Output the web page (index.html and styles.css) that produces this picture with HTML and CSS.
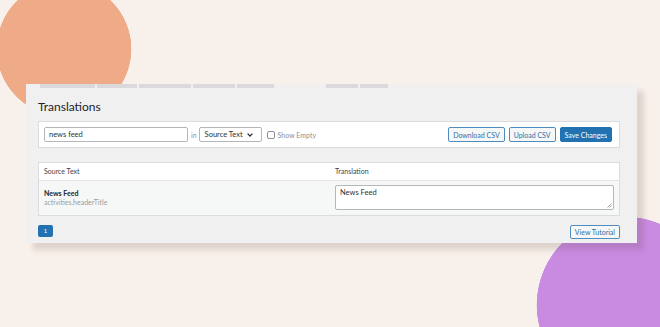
FILE: index.html
```html
<!DOCTYPE html>
<html lang="en">
<head>
    <meta charset="UTF-8">
    <title>Translations</title>
    <link rel="stylesheet" href="styles.css">
</head>
<body>
<div class="page">
    <div class="panel">
        <div class="tabs">
            <span class="tab"></span>
            <span class="tab"></span>
            <span class="tab"></span>
            <span class="tab"></span>
            <span class="tab"></span>
            <span class="tab active"></span>
            <span class="tab"></span>
            <span class="tab"></span>
        </div>

        <div class="panel-body">
            <h2 class="title">Translations</h2>

            <div class="filter">
                <div class="search">news feed</div>
                <span class="in">in</span>
                <div class="select">
                    Source Text
                    <svg class="chevron" width="6" height="4" viewBox="0 0 6 4"><path d="M0.6 0.6 L3 3 L5.4 0.6" fill="none" stroke="#2c3338" stroke-width="1.3"/></svg>
                </div>
                <label class="check"><span class="box"></span>Show Empty</label>
                <div class="actions">
                    <span class="btn">Download CSV</span>
                    <span class="btn">Upload CSV</span>
                    <span class="btn btn-primary">Save Changes</span>
                </div>
            </div>

            <div class="strings">
                <div class="row head">
                    <div class="cell">Source Text</div>
                    <div class="cell">Translation</div>
                </div>
                <div class="row item">
                    <div class="cell source">
                        <strong>News Feed</strong>
                        <span class="key">activities.headerTitle</span>
                    </div>
                    <div class="cell">
                        <div class="textarea">
                            News Feed
                            <svg class="grip" width="5" height="5" viewBox="0 0 5 5"><path d="M4.5 0.5 L0.5 4.5 M4.5 2.5 L2.5 4.5" stroke="#8c8f94" stroke-width="0.8"/></svg>
                        </div>
                    </div>
                </div>
            </div>

            <div class="footer">
                <span class="page-num">1</span>
                <span class="btn">View Tutorial</span>
            </div>
        </div>
    </div>
</div>
</body>
</html>
```

FILE: styles.css
```css
* {
    margin: 0;
    padding: 0;
    box-sizing: border-box;
}

html, body {
    width: 660px;
    height: 327px;
    overflow: hidden;
}

/* the two circles are painted into the page background */
body {
    background:
        radial-gradient(circle at 64px 49px, #efab87 67px, transparent 67.6px),
        radial-gradient(circle at 625px 305px, #c98be2 88px, transparent 88.6px),
        #f8f0ea;
    font-family: Lato, "Open Sans", sans-serif;
    color: #2c3338;
}

.page {
    padding: 84px 0 0 26px;
}

.panel {
    width: 611px;
    background: #f0f0f1;
    box-shadow: 7px 7px 5px rgba(70, 50, 40, 0.14);
}

.tabs {
    display: flex;
    height: 4px;
    padding-left: 14px;
    background: #f0f0f1;
}

.tab {
    height: 4px;
    margin-right: 2px;
    background: #dadadd;
}

.tab:nth-child(1) { width: 55px; }
.tab:nth-child(2) { width: 40px; }
.tab:nth-child(3) { width: 52px; }
.tab:nth-child(4) { width: 42px; }
.tab:nth-child(5) { width: 37px; margin-right: 0; }
.tab:nth-child(6) { width: 52px; margin-right: 0; }
.tab:nth-child(7) { width: 32px; }
.tab:nth-child(8) { width: 28px; }

.tab.active {
    background: #f0f0f1;
}

.panel-body {
    padding: 11px 17px 4px 12px;
}

.title {
    font-size: 12px;
    line-height: 16px;
    font-weight: 400;
    color: #1d2327;
}

/* filter bar */
.filter {
    display: flex;
    align-items: center;
    margin-top: 6px;
    height: 27px;
    padding: 0 7px 0 5px;
    background: #fff;
    border: 1px solid #dcdcde;
    font-size: 7px;
    color: #50575e;
}

.search {
    width: 144px;
    height: 15px;
    line-height: 13px;
    padding-left: 4px;
    border: 1px solid #b4b6b9;
    border-radius: 2px;
    font-size: 7.5px;
    color: #2c3338;
}

.in {
    margin: 0 2px 0 3px;
    color: #8c8f94;
}

.select {
    display: flex;
    align-items: center;
    justify-content: space-between;
    width: 63px;
    height: 15px;
    padding: 0 8px 0 5px;
    border: 1px solid #b4b6b9;
    border-radius: 2px;
    font-size: 7.5px;
    color: #2c3338;
}

.check {
    display: flex;
    align-items: center;
    margin-left: 5px;
    color: #8c8f94;
}

.box {
    width: 8px;
    height: 8px;
    margin-right: 3px;
    border: 1px solid #8c8f94;
    border-radius: 2px;
    background: #fff;
}

.actions {
    display: flex;
    gap: 4px;
    margin-left: auto;
}

.btn {
    display: inline-flex;
    align-items: center;
    height: 15px;
    padding: 0 4px;
    border: 1px solid #4f8cc0;
    border-radius: 2px;
    background: #f6f7f7;
    color: #2f6fa8;
    font-size: 7px;
    white-space: nowrap;
}

.btn-primary {
    border-color: #2271b1;
    background: #2271b1;
    color: #fff;
}

/* strings table */
.strings {
    margin-top: 14px;
    border: 1px solid #dcdcde;
    background: #fff;
    font-size: 7px;
}

.row {
    display: grid;
    grid-template-columns: 291px 1fr;
}

.head {
    height: 18px;
    line-height: 17px;
    border-bottom: 1px solid #e2e2e4;
    color: #3c434a;
}

.head .cell {
    padding-left: 5px;
}

.item {
    height: 34px;
    background: #f6f7f7;
}

.source {
    display: flex;
    flex-direction: column;
    padding: 8px 0 0 5px;
    line-height: 9px;
}

.source strong {
    font-weight: 700;
    color: #1d2327;
}

.key {
    color: #9a9da2;
}

.item .cell:last-child {
    padding: 4px 5px 0 5px;
}

.textarea {
    position: relative;
    height: 25px;
    padding: 2px 4px;
    line-height: 9px;
    background: #fff;
    border: 1px solid #b4b6b9;
    border-radius: 2px;
    font-size: 7.5px;
    color: #2c3338;
}

.grip {
    position: absolute;
    right: 1px;
    bottom: 1px;
}

.footer {
    display: flex;
    justify-content: space-between;
    align-items: flex-start;
    margin-top: 9px;
}

.page-num {
    width: 15px;
    height: 12px;
    line-height: 12px;
    text-align: center;
    border-radius: 2px;
    background: #2271b1;
    color: #fff;
    font-size: 6px;
}

.footer .btn {
    height: 14px;
}
```
